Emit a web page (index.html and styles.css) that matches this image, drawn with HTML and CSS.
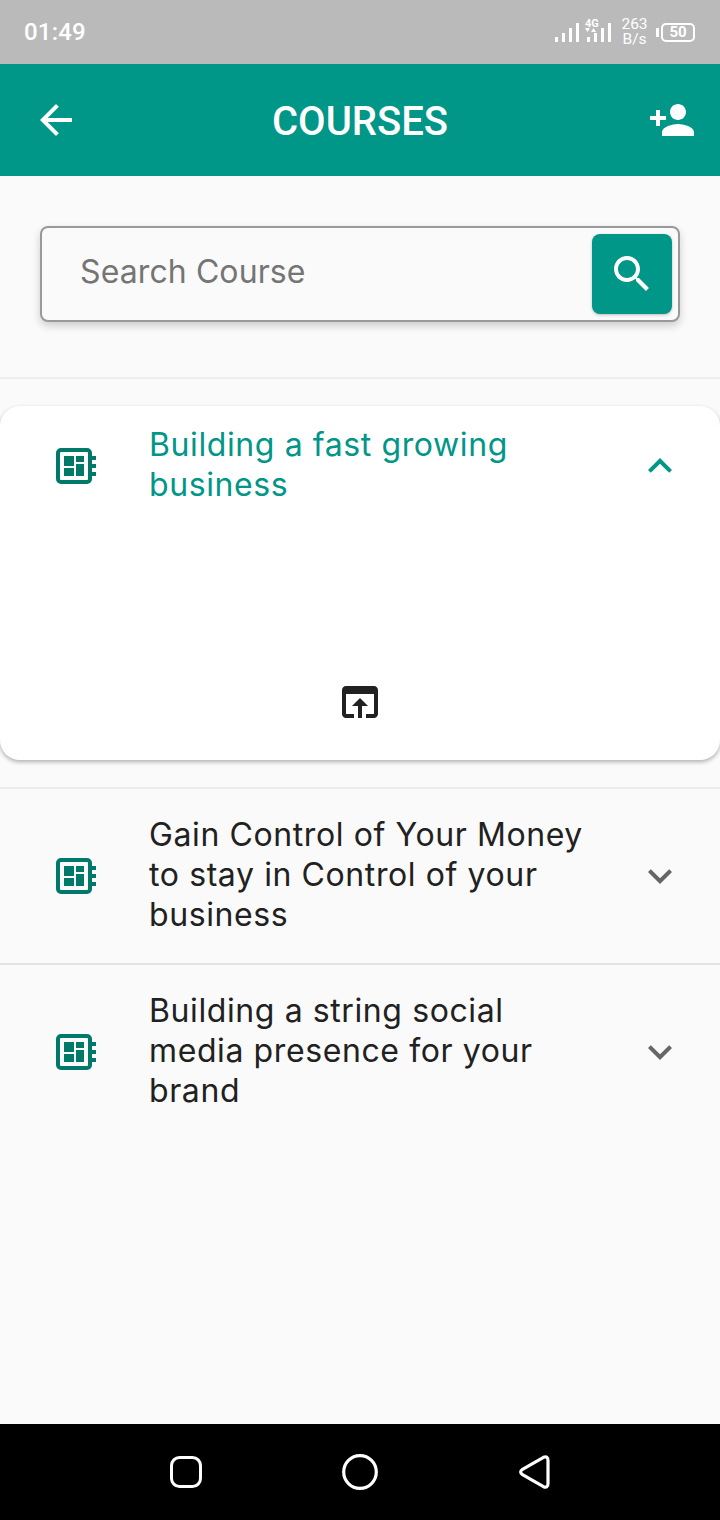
FILE: index.html
```html
<!DOCTYPE html>
<html lang="en">
<head>
  <meta charset="UTF-8">
  <meta name="viewport" content="width=device-width, initial-scale=1.0">
  <title>Courses</title>
  <link rel="stylesheet" href="styles.css">
</head>
<body>
  <div class="screen">
    <div class="status-bar">
      <span class="clock">01:49</span>
      <div class="status-right">
        <svg class="signal" width="57" height="30" viewBox="0 0 57 30">
          <g fill="#fff">
            <rect x="0" y="20" width="3" height="5"/>
            <rect x="7" y="16" width="3" height="9"/>
            <rect x="14" y="11" width="3" height="14"/>
            <rect x="21" y="6" width="3" height="19"/>
            <rect x="32" y="20" width="3" height="5"/>
            <rect x="39" y="16" width="3" height="9"/>
            <rect x="46" y="11" width="3" height="14"/>
            <rect x="53" y="6" width="3" height="19"/>
            <polygon points="30,11 35,11 32.5,15"/>
            <polygon points="36,15 41,15 38.5,11"/>
          </g>
          <text class="net-type" x="30" y="10">4G</text>
        </svg>
        <div class="speed"><span>263</span><span>B/s</span></div>
        <div class="battery"><span class="battery-tip"></span><span class="battery-body">50</span></div>
      </div>
    </div>

    <div class="app-bar">
      <svg class="icon back" viewBox="0 0 24 24"><path fill="#fff" d="M20 11H7.83l5.59-5.59L12 4l-8 8 8 8 1.41-1.41L7.83 13H20v-2z"/></svg>
      <h1>COURSES</h1>
      <svg class="icon add" viewBox="0 0 24 24"><path fill="#fff" d="M15 12c2.21 0 4-1.79 4-4s-1.79-4-4-4-4 1.79-4 4 1.79 4 4 4zm-9-2V7H4v3H1v2h3v3h2v-3h3v-2H6zm9 4c-2.67 0-8 1.34-8 4v2h16v-2c0-2.66-5.33-4-8-4z"/></svg>
    </div>

    <div class="main">
      <div class="search-section">
        <div class="search-box">
          <input class="search-input" type="text" placeholder="Search Course">
          <button class="search-btn">
            <svg class="icon" viewBox="0 0 24 24"><path fill="#fff" d="M15.5 14h-.79l-.28-.27C15.41 12.59 16 11.11 16 9.5 16 5.91 13.09 3 9.5 3S3 5.91 3 9.5 5.91 16 9.5 16c1.61 0 3.09-.59 4.23-1.57l.27.28v.79l5 4.99L20.49 19l-4.99-5zm-6 0C7.01 14 5 11.99 5 9.5S7.01 5 9.5 5 14 7.01 14 9.5 11.99 14 9.5 14z"/></svg>
          </button>
        </div>
      </div>

      <div class="card-wrap">
        <div class="card">
          <div class="course-row open">
            <svg class="course-icon" width="40" height="36" viewBox="0 0 40 36"><use href="#board"/></svg>
            <div class="course-title">Building a fast growing business</div>
            <svg class="icon chevron" viewBox="0 0 24 24"><path fill="#009688" d="M12 8l-6 6 1.41 1.41L12 10.83l4.59 4.58L18 14z"/></svg>
          </div>
          <div class="card-actions">
            <svg class="icon" viewBox="0 0 24 24"><path fill="#212121" d="M19 4H5c-1.11 0-2 .9-2 2v12c0 1.1.89 2 2 2h4v-2H5V8h14v10h-4v2h4c1.1 0 2-.9 2-2V6c0-1.1-.89-2-2-2zm-7 6l-4 4h3v6h2v-6h3l-4-4z"/></svg>
          </div>
        </div>
      </div>

      <div class="course-row bordered">
        <svg class="course-icon" width="40" height="36" viewBox="0 0 40 36"><use href="#board"/></svg>
        <div class="course-title">Gain Control of Your Money to stay in Control of your business</div>
        <svg class="icon chevron" viewBox="0 0 24 24"><path fill="#666" d="M16.59 8.59L12 13.17 7.41 8.59 6 10l6 6 6-6z"/></svg>
      </div>

      <div class="course-row">
        <svg class="course-icon" width="40" height="36" viewBox="0 0 40 36"><use href="#board"/></svg>
        <div class="course-title">Building a string social media presence for your brand</div>
        <svg class="icon chevron" viewBox="0 0 24 24"><path fill="#666" d="M16.59 8.59L12 13.17 7.41 8.59 6 10l6 6 6-6z"/></svg>
      </div>
    </div>

    <div class="nav-bar">
      <svg width="36" height="36" viewBox="0 0 36 36"><rect x="3.5" y="3.5" width="29" height="29" rx="8" fill="none" stroke="#fff" stroke-width="3"/></svg>
      <svg width="36" height="36" viewBox="0 0 36 36"><circle cx="18" cy="18" r="16.3" fill="none" stroke="#fff" stroke-width="3.2"/></svg>
      <svg width="36" height="36" viewBox="0 0 36 36"><path d="M6.5 15.3 L27.5 3.3 Q32 1.5 32 6.5 V29.5 Q32 34.5 27.5 32.7 L6.5 20.7 Q2.8 18 6.5 15.3 Z" fill="none" stroke="#fff" stroke-width="3.2" stroke-linejoin="round"/></svg>
    </div>
  </div>

  <svg class="defs" width="0" height="0">
    <symbol id="board" viewBox="0 0 40 36">
      <rect x="2" y="2" width="32" height="32" rx="3" fill="none" stroke="#00796b" stroke-width="4"/>
      <g fill="#00796b">
        <rect x="36" y="8" width="4" height="4"/>
        <rect x="36" y="16" width="4" height="4"/>
        <rect x="36" y="24" width="4" height="4"/>
        <rect x="8" y="8" width="10" height="10"/>
        <rect x="8" y="20" width="10" height="8"/>
        <rect x="20" y="8" width="8" height="6"/>
        <rect x="20" y="16" width="8" height="12"/>
      </g>
    </symbol>
  </svg>
</body>
</html>
```

FILE: styles.css
```css
html, body {
  margin: 0;
  padding: 0;
  background: #fafafa;
  font-family: 'Inter', 'Noto Sans', sans-serif;
}
.screen {
  width: 720px;
  height: 1520px;
  display: flex;
  flex-direction: column;
  overflow: hidden;
}
.defs {
  display: block;
  height: 0;
}
.icon {
  width: 48px;
  height: 48px;
  display: block;
  flex: none;
}

/* status bar */
.status-bar {
  height: 64px;
  background: #bababa;
  color: #fff;
  display: flex;
  align-items: center;
  justify-content: space-between;
  padding: 0 25px 0 24px;
  font-family: 'Roboto', sans-serif;
}
.clock {
  font-size: 24px;
  font-weight: 500;
  letter-spacing: 0.2px;
}
.status-right {
  display: flex;
  align-items: center;
}
.signal {
  display: block;
  margin-right: 9px;
}
.net-type {
  font-family: 'Roboto', sans-serif;
  font-size: 11px;
  font-weight: 700;
  fill: #fff;
}
.speed {
  width: 27px;
  display: flex;
  flex-direction: column;
  align-items: center;
  font-size: 15.5px;
  line-height: 15.5px;
  margin-right: 8px;
}
.battery {
  display: flex;
  align-items: center;
  gap: 2px;
}
.battery-tip {
  width: 3px;
  height: 9px;
  background: #fff;
}
.battery-body {
  width: 34px;
  height: 19px;
  box-sizing: border-box;
  border: 2px solid #fff;
  border-radius: 5px;
  font-size: 15px;
  line-height: 15px;
  font-weight: 700;
  text-align: center;
}

/* app bar */
.app-bar {
  height: 112px;
  background: #009688;
  display: grid;
  grid-template-columns: 1fr auto 1fr;
  align-items: center;
  padding: 0 24px 0 32px;
}
.app-bar h1 {
  margin: 2px 8px 0 0;
  color: #fff;
  font-family: 'Roboto', sans-serif;
  font-size: 40px;
  font-weight: 500;
}
.add {
  justify-self: end;
}

.main {
  flex: 1;
}

/* search */
.search-section {
  padding: 50px 40px 55px;
  border-bottom: 2px solid #ececec;
}
.search-box {
  height: 96px;
  box-sizing: border-box;
  border: 2px solid #999;
  border-radius: 8px;
  box-shadow: 0 4px 8px rgba(0, 0, 0, 0.18);
  display: flex;
  align-items: center;
  justify-content: space-between;
  padding: 0 6px 0 38px;
  background: #fafafa;
}
.search-input {
  flex: 1;
  min-width: 0;
  border: none;
  outline: none;
  background: none;
  padding: 0 0 6px;
  font-family: 'Inter', 'Noto Sans', sans-serif;
  font-size: 32px;
  letter-spacing: 0.1px;
}
.search-input::placeholder {
  color: #757575;
}
.search-btn {
  width: 80px;
  height: 80px;
  border: none;
  border-radius: 8px;
  background: #009688;
  padding: 0;
  display: flex;
  align-items: center;
  justify-content: center;
  box-shadow: 0 1px 3px rgba(0, 0, 0, 0.25);
}

/* course list */
.card-wrap {
  padding: 27px 0;
  border-bottom: 2px solid #ececec;
}
.card {
  height: 354px;
  box-sizing: border-box;
  background: #fff;
  border-radius: 20px;
  box-shadow: 0 2px 4px rgba(0, 0, 0, 0.3);
  display: flex;
  flex-direction: column;
  justify-content: space-between;
  padding-bottom: 34px;
}
.card-actions {
  display: flex;
  justify-content: center;
}
.course-row {
  display: flex;
  align-items: center;
  padding: 26px 36px 28px 56px;
}
.course-row.open {
  padding-top: 19px;
  padding-bottom: 0;
}
.course-row.bordered {
  border-bottom: 2px solid #e4e4e4;
}
.course-icon {
  flex: none;
  display: block;
  margin-top: 2px;
}
.course-title {
  flex: 1;
  margin: 0 46px 0 53px;
  font-size: 32px;
  line-height: 40px;
  letter-spacing: 0.6px;
  color: #212121;
}
.course-row.open .course-title {
  color: #009688;
}
.chevron {
  margin-top: 2px;
}

/* nav bar */
.nav-bar {
  height: 96px;
  background: #000;
  display: flex;
  align-items: center;
  justify-content: center;
  gap: 138px;
}
```
